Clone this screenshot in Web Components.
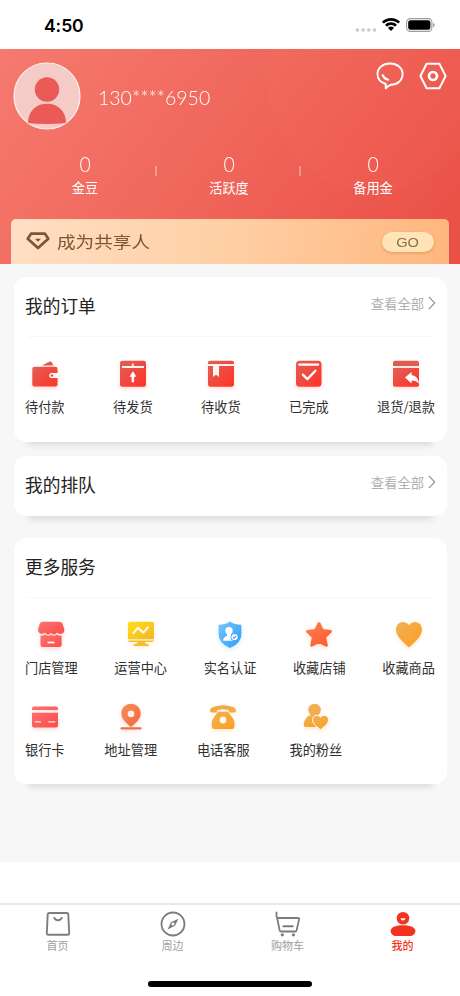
<!DOCTYPE html>
<html lang="zh-CN">
<head>
<meta charset="utf-8">
<meta name="viewport" content="width=device-width, initial-scale=1">
<title>我的</title>
<style>
html,body{margin:0;padding:0;background:#fff}
body{width:460px;height:996px;overflow:hidden;font-family:"Liberation Sans","Noto Sans CJK SC",sans-serif;color:#222}
</style>
</head>
<body>
<profile-app></profile-app>
<script>
const grad = (id, a, b) => `<linearGradient id="${id}" x1="0" y1="0" x2="1" y2="1"><stop offset="0" stop-color="${a}"/><stop offset="1" stop-color="${b}"/></linearGradient>`;
const RED = grad('g', '#e0605a', '#ff3324');
const PINK = grad('g', '#fb7474', '#fc4d48');
const GOLD = grad('g', '#eeb256', '#ff9d20');
const svg = (w, h, body) => `<svg width="${w}" height="${h}" viewBox="0 0 ${w} ${h}" fill="none">${body}</svg>`;
const ICONS = {
  cell: svg(22, 4, '<g fill="#c4c4c4"><circle cx="2.3" cy="2" r="1.8"/><circle cx="8" cy="2" r="1.8"/><circle cx="13.8" cy="2" r="1.8"/><circle cx="19.5" cy="2" r="1.8"/></g>'),
  wifi: svg(18, 13, '<g fill="#000"><path d="M9 0C5.600 0 2.500 1.300.200 3.400q-.3.300 0 .6l1.300 1.300q.3.300.6 0C3.900 3.700 6.300 2.700 9 2.700s5.100 1 6.900 2.600q.3.300.6 0L17.800 4q.3-.3 0-.6C15.500 1.300 12.400 0 9 0z"/><path d="M9 4.300c-2.200 0-4.200.8-5.700 2.200q-.3.300 0 .6l1.400 1.400q.3.300.6 0C6.300 7.500 7.600 7 9 7s2.700.5 3.700 1.500q.3.300.6 0l1.400-1.400q.3-.3 0-.6C13.200 5.100 11.200 4.300 9 4.300z"/><path d="M9 8.600c-1.100 0-2 .4-2.700 1q-.3.300 0 .6l2.400 2.500q.3.300.6 0l2.400-2.500q.3-.3 0-.6c-.7-.6-1.600-1-2.700-1z"/></g>'),
  battery: svg(29, 14, '<rect x=".6" y=".6" width="25.300" height="12.800" rx="3.800" stroke="#9c9c9c" stroke-width="1.100"/><rect x="2.200" y="2.200" width="22.200" height="9.600" rx="2.300" fill="#000"/><path d="M27.200 4.700q1.600.7 1.600 2.300t-1.600 2.300z" fill="#999"/>'),
  avatar: svg(68, 68, '<clipPath id="c"><circle cx="34" cy="34" r="32.800"/></clipPath><circle cx="34" cy="34" r="33" fill="#f5cbc8" stroke="#fff1ee" stroke-width="1.200"/><g clip-path="url(#c)" fill="#ea5b58"><circle cx="34" cy="27.500" r="12.200"/><path d="M15 61c0-12 8-19.300 19-19.300S53 49 53 61q-8 1-19 1t-19-1z"/></g>'),
  chat: svg(28, 28, '<path d="M14 1.500c7.200 0 12.600 4.300 12.600 10.600S21.500 22.600 15 22.800c-1.800.3-3.600 1.700-5.300 3.500V22C5.100 20.600 1.500 17.400 1.500 12.100 1.500 5.800 6.800 1.500 14 1.500z" stroke="#fff" stroke-width="1.900" stroke-linejoin="round"/><path d="M6.700 13.200q1.800 3.900 5.500 4.600" stroke="#fff" stroke-width="2.100" stroke-linecap="round"/>'),
  setting: svg(28, 28, '<path d="M7.600 1.800h12.800L26.600 14l-6.200 12.300H7.600L1.400 14z" stroke="#fff" stroke-width="2" stroke-linejoin="round"/><circle cx="14" cy="14" r="4" stroke="#fff" stroke-width="2.700"/>'),
  diamond: svg(24, 18, '<path d="M5.200 1.600h13.600l3.500 5.100L12 16.100 1.700 6.700z" stroke="#7f5432" stroke-width="2.700" stroke-linejoin="round"/><path d="M9 6.700h6l-3 3.100z" fill="#7f5432"/>'),
  chevron: svg(8, 14, '<path d="M.9.900 6.700 7 .9 13.100" stroke="#8e8e8e" stroke-width="1.100"/>'),
  pay: svg(28, 28, RED + '<path d="m11 5.600 7.700-4q1.200-.5 1.900.6l2 3.400z" fill="#dc5c53"/><path d="M3.500 6.700h20.800q2.200 0 2.200 2.300v15.500q0 2.100-2 2.100h-21q-2.200 0-2.200-2.100V9q0-2.300 2.200-2.300z" fill="url(#g)"/><path d="M27 13h-6.300a2.500 2.500 0 0 0 0 5H27z" fill="#fff"/><circle cx="20.900" cy="15.500" r="1.300" fill="#ee4a40"/>'),
  send: svg(28, 28, RED + '<rect x="1" y=".8" width="26" height="25.900" rx="2.200" fill="url(#g)"/><path d="M3 7h22M13.800 3.500V7" stroke="#fff3ec" stroke-width="1.800"/><path d="m13.900 11.300 3.500 5.400h-2.300v5.500h-2.500v-5.500h-2.200z" fill="#fff"/>'),
  receive: svg(28, 28, RED + '<path d="M1 4.200V2.400Q1 .8 3 .8h22q2 0 2 1.600v1.800zM1 6.100h26v18.500q0 2.100-2.100 2.100H3.100Q1 26.700 1 24.600z" fill="url(#g)"/><path d="M1 5h26" stroke="#fff" stroke-width="1.500"/><path d="M6 5.300h6V17l-3-2.200L6 17z" fill="#fff3ef"/>'),
  done: svg(28, 28, RED + '<rect x="1" y=".8" width="25.500" height="25.900" rx="3.500" fill="url(#g)"/><path d="M4.200 4.600h19" stroke="#fff" stroke-width="2.100" stroke-linecap="round"/><path d="m7.800 14.600 4.600 4.500 8-8.300" stroke="#fff" stroke-width="2.300" stroke-linecap="round" stroke-linejoin="round"/>'),
  refund: svg(28, 28, RED + '<path d="M1 6V2.500Q1 .8 2.800.8h22.400Q27 .8 27 2.500V6z" fill="#e15c50"/><path d="M1 8h26v17q0 1.700-1.800 1.700H2.800Q1 26.700 1 25z" fill="url(#g)"/><path d="m13 17.500 6.600-5.400v3.200c4 .2 6.600 2.700 7.400 8.300-2-2.400-4-3.200-7.400-3.200v3z" fill="#fff"/>'),
  shop: svg(28, 28, PINK + '<path d="M5.700.8h16.800q2 0 3 1.700l1.600 5q1 3.500-1.800 5-3.200 1.300-5.300-1-2.400 3.600-6 .4-3.400 3.200-6-.4-3 2.500-5.500.4Q.7 10.500 1.200 8l1.500-5Q3.500.8 5.700.8z" fill="url(#g)"/><path d="M3.500 14.600q2.500.5 4.400-1.100 3 2.200 6.100.2 3 2 6.100-.2 1.700 1.500 4.500 1.100V24q0 2-2 2h-17q-2.100 0-2.100-2z" fill="url(#g)"/><path d="M10.500 21.500h7" stroke="#fff" stroke-width="1.600"/>'),
  chart: svg(28, 28, grad('g', '#ffe012', '#f2b52c') + '<path d="M3 .8h22q2 0 2 2v15.400H1V2.800q0-2 2-2z" fill="url(#g)"/><path d="M1 19.600h26q0 1.400-2 1.400h-7v1.300l3 1q1.300.4.8 1.800H6.300q-.5-1.400.8-1.800l3.200-1V21H3q-2 0-2-1.400z" fill="#f5bd2b"/><path d="m6.400 12 4.500-5.300 5.500 5 4.700-5.500" stroke="#fffbe8" stroke-width="2" stroke-linecap="round" stroke-linejoin="round"/>'),
  verify: svg(28, 28, grad('g', '#7cc6fa', '#289efc') + '<path d="M14 .5q5 3.300 11.400 3.200v9.500q0 9-11.400 13.800Q2.600 22.200 2.600 13.200V3.700Q9 3.800 14 .5z" fill="url(#g)"/><circle cx="13" cy="9.800" r="3.700" fill="#fff"/><path d="M11 12h4v3l3.500 1.500v3.300H7q0-3.600 4-4.800z" fill="#fff"/><circle cx="18.600" cy="16" r="4" fill="#45a9f9"/><circle cx="18.600" cy="16" r="3.100" fill="#fff"/><path d="m17 16 1.200 1.200 2.100-2.300" stroke="#45a9f9" stroke-width="1.100"/>'),
  star: svg(28, 28, '<linearGradient id="g" gradientUnits="userSpaceOnUse" x1="4" y1="2" x2="22" y2="26"><stop offset="0" stop-color="#fb7f52"/><stop offset="1" stop-color="#ff5a2c"/></linearGradient><path d="m14 2.500 3.500 6.900 8 1.100-5.800 5.500 1.700 8.300-7.400-3.900-7.400 3.900 1.700-8.300-5.800-5.500 8-1.100z" fill="url(#g)" stroke="url(#g)" stroke-width="2.800" stroke-linejoin="round"/>'),
  heart: svg(28, 28, GOLD + '<path d="M14 26.500C9.200 22 1 16 1 8.600 1 3.800 4.200.9 8 .9c2.500 0 4.700 1.200 6 3.300C15.300 2.100 17.500.9 20 .9c3.800 0 7 2.900 7 7.700C27 16 18.800 22 14 26.500z" fill="url(#g)"/>'),
  card: svg(28, 28, PINK + '<path d="M1 7V5.500q0-2 2-2h22q2 0 2 2V7zM1 9.800h26v12.700q0 2-2 2H3q-2 0-2-2z" fill="url(#g)"/><path d="M4 18.800h6M17.300 18.800h7" stroke="#fff" stroke-width="1.300" opacity=".85"/>'),
  pin: svg(28, 28, grad('g', '#f2915c', '#fb6339') + '<path fill-rule="evenodd" d="M14 .8c5.500 0 9.700 4.300 9.700 9.700 0 5.300-4.700 9.500-9.700 13.500-5-4-9.700-8.200-9.700-13.500C4.300 5.100 8.500.8 14 .8zM14 7.400a3.400 3.400 0 1 0 0 6.800 3.400 3.400 0 0 0 0-6.800z" fill="url(#g)"/><path d="M4.500 25.300h19" stroke="#ed704c" stroke-width="2.300" stroke-linecap="round"/>'),
  phone: svg(28, 28, GOLD + '<path d="M1 8q0-2.800 3-4Q14 .3 24 4q3 1.200 3 4 0 1.500-2.300 1.500h-2.600q-1.900 0-2.200-1.600l-.4-.9Q14 5.500 8.500 7l-.4.900q-.3 1.600-2.200 1.600H3.300Q1 9.500 1 8z" fill="#f0aa46"/><path fill-rule="evenodd" d="M10 8.800h8q1.200 0 2 1.200l4 5.500q1.400 2 1.400 4.300v3.900q0 2.300-2.200 2.300H5q-2.200 0-2.200-2.300v-3.900q0-2.300 1.400-4.300L8 10q.8-1.200 2-1.200zM14 13.600a3.400 3.400 0 1 0 0 6.800 3.400 3.400 0 0 0 0-6.800z" fill="url(#g)"/>'),
  fans: svg(28, 28, GOLD + '<circle cx="12.600" cy="7" r="6.200" fill="#f0ae51"/><path d="M9 12h7l2 2.200q-8 2-4.500 8.800l.8.900H3.400q-2 0-1.700-2.400Q2.400 14 9 12z" fill="url(#g)"/><path d="M18.500 26.700c-3-2.500-8-5.500-8-9.900 0-2.900 2-4.600 4.300-4.600q2.200 0 3.700 1.900 1.500-1.900 3.700-1.900c2.300 0 4.300 1.700 4.300 4.600 0 4.400-5 7.400-8 9.900z" fill="url(#g)" stroke="#fff" stroke-width="1"/>'),
  home: svg(26, 26, '<path d="M4.300 2h17.400q1.500 0 1.600 1.500l.9 18.800q.1 1.500-1.500 1.500H3.300q-1.600 0-1.500-1.500l.9-18.800Q2.800 2 4.300 2z" stroke="#7d7d7d" stroke-width="1.900"/><path d="M9 6.300q1 3 4 3t4-3" stroke="#7d7d7d" stroke-width="2"/>'),
  compass: svg(26, 26, '<circle cx="13" cy="13" r="11.500" stroke="#7d7d7d" stroke-width="1.800"/><path fill-rule="evenodd" d="m18.400 7.700-3.300 7-7.500 3.700 3.300-7.100zM13 11.400a1.600 1.600 0 1 0 0 3.200 1.600 1.600 0 0 0 0-3.200z" fill="#7d7d7d"/>'),
  cart: svg(26, 26, '<path d="M1.500 1.300v4.200q.1 1.500 1.500 1.500h20q1.400 0 1.100 1.400l-2.500 10.800q-.3 1.300-1.500 1.300H6q-1.200 0-1.400-1.300L2 6.200" stroke="#7d7d7d" stroke-width="1.800" stroke-linecap="round"/><path d="M8.300 15.300h9.500" stroke="#7d7d7d" stroke-width="1.900" stroke-linecap="round"/><circle cx="7.300" cy="23.800" r="1.600" fill="#7d7d7d"/><circle cx="18.400" cy="23.800" r="1.600" fill="#7d7d7d"/>'),
  me: svg(26, 26, '<circle cx="13" cy="7.200" r="6.300" fill="#f3331f"/><path d="M10.500 7.200h5q-.3 2.300-2.500 2.300t-2.500-2.300z" fill="#fff"/><path d="M13 14.200c8 0 12.400 2.300 12.400 5.900 0 2.900-2.600 5-5.400 5H6C3.200 25.100.6 23 .6 20.100c0-3.600 4.400-5.900 12.400-5.900z" fill="#f3331f"/>')
};

const define = (name, render) => customElements.define(name, class extends HTMLElement {
  constructor() {
    super();
    this.attachShadow({ mode: 'open' });
  }
  connectedCallback() {
    const t = document.createElement('template');
    t.innerHTML = render(this);
    this.shadowRoot.replaceChildren(t.content.cloneNode(true));
  }
});

define('ui-icon', el => `<style>:host{display:block;flex:none;line-height:0}svg{display:block;overflow:visible}</style>${ICONS[el.getAttribute('name')]}`);

define('status-bar', () => `
<style>
:host{display:flex;box-sizing:border-box;height:49px;padding:0 25px 0 44px;align-items:flex-start}
time{flex:1;padding-top:15px;font:600 17.600px/22px Inter,sans-serif;letter-spacing:-.1px;color:#000}
.cell{margin:28px 5px 0 0;opacity:.9}.wifi{margin:18px 6px 0 0}.bat{margin-top:18px}
</style>
<time>4:50</time><ui-icon class="cell" name="cell"></ui-icon><ui-icon class="wifi" name="wifi"></ui-icon><ui-icon class="bat" name="battery"></ui-icon>`);

define('stat-item', el => `
<style>
:host{display:flex;flex-direction:column;align-items:center;flex:1;color:#fff}
b{font:300 21.500px/24px Lato,sans-serif;transform:scaleX(.9)}
span{font-size:13.2px;line-height:18px;margin-top:4px}
</style><b>${el.getAttribute('value')}</b><span><slot></slot></span>`);

define('share-banner', () => `
<style>
:host{display:flex;box-sizing:border-box;align-items:center;height:45px;margin:0 11.500px 0 11px;padding:0 14.500px 0 15px;border-radius:5px 5px 0 0;background:linear-gradient(100deg,#ffdfc5 0%,#ffcfa4 50%,#ffb67e 100%)}
ui-icon{margin:-2px 7px 0 0}
.t{flex:1;font-size:16.200px;line-height:24px;color:#7f5432}
.t span{display:inline-block;transform:scaleX(1.15);transform-origin:0 50%}
.go{width:52px;height:20px;border-radius:10px;background:#ffe4b8;box-shadow:0 1px 3px rgba(190,110,40,.45);color:#8a6d4c;font-size:13.500px;line-height:21px;text-align:center}
.go span{display:inline-block;transform:scaleX(1.08)}
</style>
<ui-icon name="diamond"></ui-icon><div class="t"><span>成为共享人</span></div><div class="go"><span>GO</span></div>`);

define('profile-header', () => `
<style>
:host{display:flex;flex-direction:column;box-sizing:border-box;height:215px;background:
radial-gradient(circle at 375px 35px,rgba(255,150,110,.045) 0 106px,transparent 109px),
linear-gradient(128deg,#f67a6e 0%,#f0665b 48%,#ee5b51 70%,#e94f45 100%)}
.top{display:flex;height:102px;padding:13px 13px 0 13px;box-sizing:border-box}
.name{flex:1;margin:22px 0 0 17px;font:300 20.500px/26px Lato,sans-serif;color:#fff}
.name span{display:inline-block;transform:scaleX(.95);transform-origin:0 50%}
.chat{margin-right:15px}
.stats{display:flex;align-items:flex-start;padding:0 15px 0 13px;height:68px;box-sizing:border-box}
i{width:1px;height:10px;margin:15px 0 0 -1px;background:rgba(255,255,255,.65);transform:translateX(-.500px)}
.stats stat-item{margin-top:1px}
</style>
<div class="top"><ui-icon name="avatar"></ui-icon><div class="name"><span>130****6950</span></div><ui-icon class="chat" name="chat"></ui-icon><ui-icon name="setting"></ui-icon></div>
<div class="stats"><stat-item value="0">金豆</stat-item><i></i><stat-item value="0">活跃度</stat-item><i></i><stat-item value="0">备用金</stat-item></div>
<share-banner></share-banner>`);

define('panel-card', el => `
<style>
:host{display:block;box-sizing:border-box;background:#fff;border-radius:13px;box-shadow:0 17px 7px -14px rgba(0,0,0,.12);padding:0 12px 0 11px}
header{display:flex;justify-content:space-between;height:59px}
h2{margin:18px 0 0;font-weight:400;font-size:17.700px;line-height:24px;color:#222}
.more{display:flex;height:20px;margin:16px -1px 0 0;align-items:center;font-size:13.300px;color:#b0b0b0;gap:4px}
hr{border:0;height:1px;margin:0 2px 0 3px;background:#f7f7f7}
</style>
<header><h2>${el.getAttribute('heading')}</h2>${el.hasAttribute('more') ? '<div class="more"><span>查看全部</span><ui-icon name="chevron"></ui-icon></div>' : ''}</header>
${el.hasAttribute('rule') ? '<hr>' : ''}<slot></slot>`);

define('icon-row', () => `<style>:host{display:flex;justify-content:space-between;height:82px}</style><slot></slot>`);

define('icon-item', el => `
<style>
:host{display:flex;flex-direction:column;align-items:center;min-width:39px;font-family:"Noto Sans CJK SC",sans-serif;font-size:13.200px;line-height:20px;color:#303030;white-space:nowrap}
ui-icon{margin-bottom:9px;filter:drop-shadow(0 2px 2px ${el.getAttribute('glow') || 'rgba(255,80,50,.2)'})}
</style>${el.getAttribute('icon') ? `<ui-icon name="${el.getAttribute('icon')}"></ui-icon>` : ''}<slot></slot>`);

define('tab-item', el => `
<style>
:host{display:flex;flex-direction:column;align-items:center;flex:1;font-size:11px;line-height:16px;color:#a0a0a0}
:host([active]){color:#f3331f;font-weight:500}
ui-icon{margin-bottom:1px}
</style><ui-icon name="${el.getAttribute('icon')}"></ui-icon><slot></slot>`);

define('tab-bar', () => `
<style>
:host{display:flex;flex-direction:column;box-sizing:border-box;height:93px;border-top:2px solid #e9e9e9;background:#fff;align-items:center}
nav{display:flex;width:100%;height:76px;padding-top:6px;box-sizing:border-box}
.bar{width:164px;height:6px;border-radius:3px;background:#000}
</style>
<nav><tab-item icon="home">首页</tab-item><tab-item icon="compass">周边</tab-item><tab-item icon="cart">购物车</tab-item><tab-item icon="me" active>我的</tab-item></nav><div class="bar"></div>`);

define('profile-app', () => `
<style>
:host{display:flex;flex-direction:column;width:460px;height:996px}
main{display:flex;flex-direction:column;height:598px;box-sizing:border-box;padding:13px 13px 0 14px;background:#f7f7f7}
.orders{height:165px;margin-bottom:14px}
.queue{height:60px;margin-bottom:22px}
.more{height:246px}
.orders icon-row{padding-top:23px}
.more icon-row.first{padding-top:23px}
tab-bar{margin-top:41px}
</style>
<status-bar></status-bar>
<profile-header></profile-header>
<main>
<panel-card class="orders" heading="我的订单" more rule><icon-row>
<icon-item icon="pay">待付款</icon-item><icon-item icon="send">待发货</icon-item><icon-item icon="receive">待收货</icon-item><icon-item icon="done">已完成</icon-item><icon-item icon="refund">退货/退款</icon-item></icon-row></panel-card>
<panel-card class="queue" heading="我的排队" more></panel-card>
<panel-card class="more" heading="更多服务" rule>
<icon-row class="first"><icon-item icon="shop">门店管理</icon-item><icon-item icon="chart" glow="rgba(250,190,30,.22)">运营中心</icon-item><icon-item icon="verify" glow="rgba(60,160,250,.2)">实名认证</icon-item><icon-item icon="star">收藏店铺</icon-item><icon-item icon="heart" glow="rgba(250,170,50,.22)">收藏商品</icon-item></icon-row>
<icon-row><icon-item icon="card">银行卡</icon-item><icon-item icon="pin">地址管理</icon-item><icon-item icon="phone" glow="rgba(250,170,50,.22)">电话客服</icon-item><icon-item icon="fans" glow="rgba(250,170,50,.22)">我的粉丝</icon-item><icon-item style="width:53px"></icon-item></icon-row>
</panel-card>
</main>
<tab-bar></tab-bar>`);
</script>
</body>
</html>
